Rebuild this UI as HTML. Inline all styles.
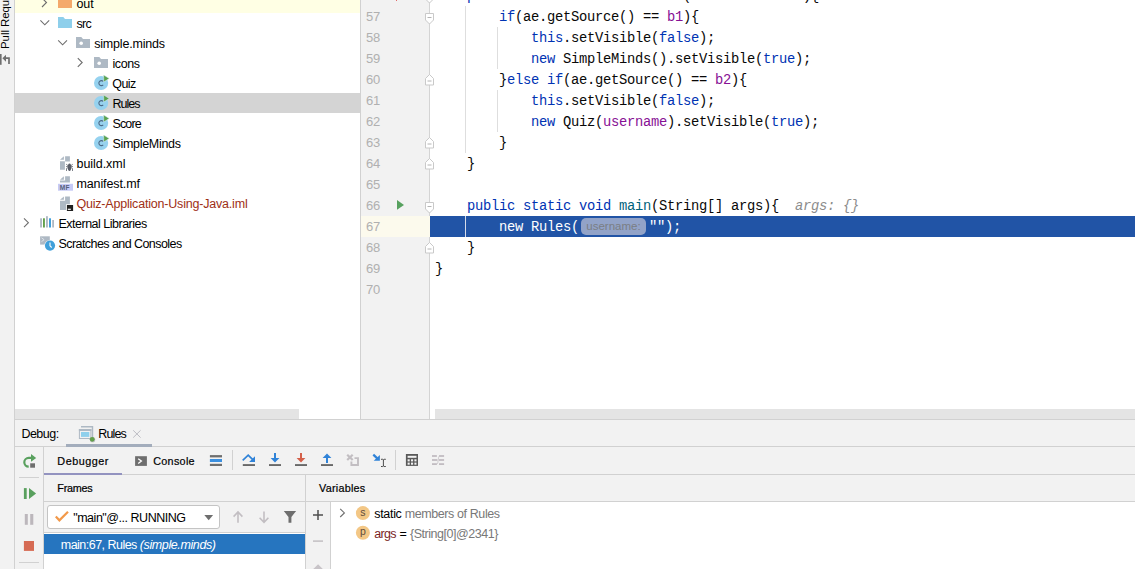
<!DOCTYPE html>
<html>
<head>
<meta charset="utf-8">
<style>
*{margin:0;padding:0;box-sizing:border-box;}
html,body{width:1135px;height:569px;overflow:hidden;background:#fff;}
body{position:relative;font-family:"Liberation Sans",sans-serif;font-size:12px;color:#000;}
.abs{position:absolute;}
#strip{left:0;top:0;width:15px;height:569px;background:#f2f2f2;border-right:1px solid #d1d1d1;overflow:hidden;}
#tree{left:15px;top:0;width:345px;height:419px;background:#fff;overflow:hidden;}
.row{position:absolute;height:20px;line-height:20px;white-space:nowrap;font-size:12.5px;}
.row span.t{position:absolute;top:0;}
#gutter{left:360px;top:0;width:70px;height:419px;background:#f2f2f2;border-left:1px solid #d1d1d1;border-right:1px solid #d4d4d4;}
.ln{position:absolute;left:5px;font-family:"Liberation Sans",sans-serif;font-size:13px;color:#b0b0b0;height:21px;line-height:21px;letter-spacing:-0.3px;}
#code{left:430px;top:0;width:705px;height:419px;background:#fff;overflow:hidden;}
.cl{position:absolute;left:5px;height:21px;line-height:23px;font-family:"Liberation Mono",monospace;font-size:13.8px;letter-spacing:-0.28px;white-space:pre;color:#080808;}
.ts{position:absolute;height:20px;line-height:20px;white-space:pre;font-size:10.8px;-webkit-text-stroke:0.2px #000;}
.tx{position:absolute;height:20px;line-height:20px;white-space:pre;font-size:12.5px;}
.k{color:#0033b3;}
.hint{color:#8c8c8c;font-style:italic;}
.inl{display:inline-block;vertical-align:top;margin:2px 3px 0 2px;height:17px;line-height:17px;letter-spacing:0;padding:0;width:65px;text-align:center;border-radius:5px;background:#92a3c8;color:#7a7e84;font-family:"Liberation Sans",sans-serif;font-size:11.5px;}
.f{color:#871094;}
.m{color:#00627a;}
</style>
</head>
<body>
<div id="strip" class="abs"><div style="position:absolute;left:-2px;top:48.500px;transform-origin:0 0;transform:rotate(-90deg);white-space:nowrap;font-size:11.5px;line-height:14px;letter-spacing:-0.080px;color:#000;">Pull Requests</div>
<svg class="abs" style="left:0;top:52px" width="14" height="16" viewBox="0 52 14 16"><rect x="0" y="54" width="1.600" height="10.800" fill="#6e6e6e"/><path d="M9 64v-5.800h-4.500" stroke="#6e6e6e" stroke-width="1.700" fill="none"/><path d="M6 54.700v7l-3.600-3.500z" fill="#6e6e6e"/></svg>
</div>
<div id="tree" class="abs">
<div class="abs" style="left:0;top:0;width:345px;height:13px;background:#ffffe4;"></div>
<div class="abs" style="left:0;top:93px;width:345px;height:20px;background:#d4d4d4;"></div>
<!-- chevrons -->
<svg class="abs" style="left:0;top:0" width="345" height="260" viewBox="15 0 345 260" fill="none" stroke="#6e6e6e" stroke-width="1.1">
<path d="M42 -2l4.500 4.500l-4.500 4.500"/>
<path d="M40.400 20.400l4.400 4.400l4.400-4.400"/>
<path d="M58.200 40.400l4.400 4.400l4.400-4.400"/>
<path d="M77.800 58.100l4.400 4.400l-4.400 4.400"/>
<path d="M24 218.300l4.400 4.400l-4.400 4.400"/>
</svg>
<svg class="abs" style="left:0;top:0" width="345" height="260" viewBox="0 0 345 260">
<path d="M45 159.700l3.900-3.500v3.500z M50.100 156.200h4.800v5.400h-4.800z M45 161.300h4.900v8.500h-4.900z" fill="#aeb9c4"/>
<g fill="#565b66"><ellipse cx="54.500" cy="167.200" rx="1.700" ry="3.700"/></g><g stroke="#5d626c" stroke-width="0.800" fill="none"><path d="M51.200 164.200l2.100 1.700M57.800 164.200l-2.100 1.700M51 166.600h7M51.500 171v-2.500l1.700-1M57.500 171v-2.500l-1.700-1"/></g>
<path d="M45 179.700l3.900-3.500v3.500z M50.100 176.200h4.800v6.300h-4.800z M45 180.400h5.200v2.100h-5.200z" fill="#aeb9c4"/>
<rect x="43" y="183.800" width="15" height="6.900" fill="#c6caf6"/>
<text x="44.700" y="189.900" font-family="Liberation Sans" font-size="6.600" font-weight="bold" fill="#56617c" letter-spacing="0.300">MF</text>
<path d="M45 199.700l3.900-3.200v3.200z M50.100 196.500h4.800v7.700h-4.800z M45 200.800h6v9.100h-6z" fill="#aeb9c4"/>
<rect x="51.900" y="205" width="6.200" height="6" fill="#1f1f1f"/><rect x="52.800" y="208.700" width="3" height="1.200" fill="#fff"/>
<rect x="25.100" y="218.300" width="1.900" height="9.200" fill="#aeb9c4"/><rect x="28" y="218.300" width="1.900" height="9.200" fill="#62a04b"/><rect x="31" y="216.200" width="1.900" height="11.300" fill="#aeb9c4"/><rect x="34" y="218.300" width="2" height="9.200" fill="#40a0da"/><rect x="37.200" y="220" width="1.800" height="7.500" fill="#aeb9c4"/>
<rect x="25.100" y="236.300" width="9.700" height="8.300" fill="#aeb9c4"/><path d="M26.500 237.800l2.600 1.900l-2.600 1.900" stroke="#e4e8ec" stroke-width="0.900" fill="none"/><circle cx="35" cy="245.600" r="5.600" fill="#fff"/><circle cx="35" cy="245.600" r="5.100" fill="#40a0da"/><path d="M35 242.500v3.300l1.700 1.700" stroke="#fff" stroke-width="1.100" fill="none"/>
</svg>
<!-- folder icons -->
<svg class="abs" style="left:43px;top:-5px" width="14" height="13" viewBox="0 0 14 13"><path d="M0 0h5.5l1.6 2H14v11H0z" fill="#f4a96b"/></svg>
<svg class="abs" style="left:43px;top:17px" width="14" height="11" viewBox="0 0 14 11"><path d="M0 0h5.3l1.7 2H14v9H0z" fill="#8ecfeb"/></svg>
<svg class="abs" style="left:61px;top:37px" width="14" height="11" viewBox="0 0 14 11"><path d="M0 0h5.3l1.7 2H14v9H0z" fill="#aeb9c4"/><circle cx="5.2" cy="6.3" r="1.8" fill="#fff"/></svg>
<svg class="abs" style="left:79px;top:57px" width="14" height="11" viewBox="0 0 14 11"><path d="M0 0h5.3l1.7 2H14v9H0z" fill="#aeb9c4"/><circle cx="5.2" cy="6.3" r="1.8" fill="#fff"/></svg>
<svg class="abs" style="left:79px;top:75px" width="16" height="16" viewBox="0 0 16 16"><circle cx="7.1" cy="8" r="7.100" fill="#96d2ef"/><path d="M9.200 9.800a2.500 2.500 0 1 1 0-3.400" fill="none" stroke="#4d6a86" stroke-width="1.100"/><path d="M9.700 0l5.500 3.500l-5.500 3.600z" fill="#5ba24f" stroke="#d9eef7" stroke-width="0.500"/></svg>
<svg class="abs" style="left:79px;top:95px" width="16" height="16" viewBox="0 0 16 16"><circle cx="7.1" cy="8" r="7.100" fill="#96d2ef"/><path d="M9.200 9.800a2.500 2.500 0 1 1 0-3.400" fill="none" stroke="#4d6a86" stroke-width="1.100"/><path d="M9.700 0l5.500 3.500l-5.500 3.600z" fill="#5ba24f" stroke="#d9eef7" stroke-width="0.500"/></svg>
<svg class="abs" style="left:79px;top:115px" width="16" height="16" viewBox="0 0 16 16"><circle cx="7.1" cy="8" r="7.100" fill="#96d2ef"/><path d="M9.200 9.800a2.500 2.500 0 1 1 0-3.400" fill="none" stroke="#4d6a86" stroke-width="1.100"/><path d="M9.700 0l5.500 3.500l-5.500 3.600z" fill="#5ba24f" stroke="#d9eef7" stroke-width="0.500"/></svg>
<svg class="abs" style="left:79px;top:135px" width="16" height="16" viewBox="0 0 16 16"><circle cx="7.1" cy="8" r="7.100" fill="#96d2ef"/><path d="M9.200 9.800a2.500 2.500 0 1 1 0-3.400" fill="none" stroke="#4d6a86" stroke-width="1.100"/><path d="M9.700 0l5.500 3.500l-5.500 3.600z" fill="#5ba24f" stroke="#d9eef7" stroke-width="0.500"/></svg>
<div class="row" style="top:-6px;left:61.5px;letter-spacing:-0.094px;">out</div>
<div class="row" style="top:14px;left:61.5px;letter-spacing:-0.688px;">src</div>
<div class="row" style="top:34px;left:79.2px;letter-spacing:-0.195px;">simple.minds</div>
<div class="row" style="top:54px;left:97.5px;letter-spacing:-0.419px;">icons</div>
<div class="row" style="top:74px;left:97.3px;letter-spacing:-0.555px;">Quiz</div>
<div class="row" style="top:94px;left:97.5px;letter-spacing:-0.975px;">Rules</div>
<div class="row" style="top:114px;left:97.5px;letter-spacing:-0.872px;">Score</div>
<div class="row" style="top:134px;left:97.5px;letter-spacing:-0.315px;">SimpleMinds</div>
<div class="row" style="top:154px;left:61.5px;letter-spacing:-0.049px;">build.xml</div>
<div class="row" style="top:174px;left:61.4px;letter-spacing:-0.099px;">manifest.mf</div>
<div class="row" style="top:194px;left:61.4px;letter-spacing:-0.195px;color:#9e2f16;">Quiz-Application-Using-Java.iml</div>
<div class="row" style="top:214px;left:43.5px;letter-spacing:-0.502px;">External Libraries</div>
<div class="row" style="top:234px;left:43.5px;letter-spacing:-0.562px;">Scratches and Consoles</div>
</div>
<div id="gutter" class="abs"><div class="abs" style="left:0;top:216px;width:69px;height:21px;background:#fcfaed;"></div>
<div class="ln" style="top:-15px">56</div>
<div class="ln" style="top:6px">57</div>
<div class="ln" style="top:27px">58</div>
<div class="ln" style="top:48px">59</div>
<div class="ln" style="top:69px">60</div>
<div class="ln" style="top:90px">61</div>
<div class="ln" style="top:111px">62</div>
<div class="ln" style="top:132px">63</div>
<div class="ln" style="top:153px">64</div>
<div class="ln" style="top:174px">65</div>
<div class="ln" style="top:195px">66</div>
<div class="ln" style="top:216px">67</div>
<div class="ln" style="top:237px">68</div>
<div class="ln" style="top:258px">69</div>
<div class="ln" style="top:279px">70</div>
<svg class="abs" style="left:35px;top:199px" width="10" height="12" viewBox="0 0 10 12"><path d="M1 1.100l7 4.800l-7 4.800z" fill="#57a15f"/></svg>
</div>
<div id="code" class="abs"><div class="abs" style="left:35px;top:6px;width:1px;height:147px;background:#dedede;"></div>
<div class="abs" style="left:67px;top:27px;width:1px;height:42px;background:#dedede;"></div>
<div class="abs" style="left:67px;top:90px;width:1px;height:42px;background:#dedede;"></div>
<div class="abs" style="left:0;top:216px;width:705px;height:21px;background:#2154a6;"></div>
<div class="abs" style="left:35px;top:216px;width:1px;height:21px;background:#d6dcea;"></div>
<div class="cl" style="top:-15px">    <span class="k">public</span> <span class="k">void</span> <span class="m">actionPerformed</span>(ActionEvent ae){</div>
<div class="cl" style="top:6px">        <span class="k">if</span>(ae.getSource() == <span class="f">b1</span>){</div>
<div class="cl" style="top:27px">            <span class="k">this</span>.setVisible(<span class="k">false</span>);</div>
<div class="cl" style="top:48px">            <span class="k">new</span> SimpleMinds().setVisible(<span class="k">true</span>);</div>
<div class="cl" style="top:69px">        }<span class="k">else</span> <span class="k">if</span>(ae.getSource() == <span class="f">b2</span>){</div>
<div class="cl" style="top:90px">            <span class="k">this</span>.setVisible(<span class="k">false</span>);</div>
<div class="cl" style="top:111px">            <span class="k">new</span> Quiz(<span class="f">username</span>).setVisible(<span class="k">true</span>);</div>
<div class="cl" style="top:132px">        }</div>
<div class="cl" style="top:153px">    }</div>
<div class="cl" style="top:195px">    <span class="k">public</span> <span class="k">static</span> <span class="k">void</span> <span class="m">main</span>(String[] args){<span class="hint">  args: {}</span></div>
<div class="cl" style="top:237px">    }</div>
<div class="cl" style="top:258px">}</div>
<div class="cl" style="top:216px;color:#fff">        new Rules(<span class="inl">username:</span>"");</div>
</div>
<div id="folds">
<div class="abs" style="left:396px;top:0;width:1px;height:1px;background:#e26a6a;"></div>
<svg class="abs" style="left:424px;top:-8px" width="11" height="12" viewBox="0 0 11 12"><path d="M1.500 0.500h8v6.500l-4 4l-4-4z" fill="#fff" stroke="#c9c9c9"/><path d="M3.500 4.500h4" stroke="#b4b4b4"/></svg>
<svg class="abs" style="left:424px;top:13px" width="11" height="12" viewBox="0 0 11 12"><path d="M1.500 0.500h8v6.500l-4 4l-4-4z" fill="#fff" stroke="#c9c9c9"/><path d="M3.500 4.500h4" stroke="#b4b4b4"/></svg>
<svg class="abs" style="left:424px;top:202px" width="11" height="12" viewBox="0 0 11 12"><path d="M1.500 0.500h8v6.500l-4 4l-4-4z" fill="#fff" stroke="#c9c9c9"/><path d="M3.500 4.500h4" stroke="#b4b4b4"/></svg>
<svg class="abs" style="left:424px;top:74px" width="11" height="12" viewBox="0 0 11 12"><path d="M1.500 11h8v-6.500l-4-4l-4 4z" fill="#fff" stroke="#c9c9c9"/><path d="M3.500 7h4" stroke="#b4b4b4"/></svg>
<svg class="abs" style="left:424px;top:137px" width="11" height="12" viewBox="0 0 11 12"><path d="M1.500 11h8v-6.500l-4-4l-4 4z" fill="#fff" stroke="#c9c9c9"/><path d="M3.500 7h4" stroke="#b4b4b4"/></svg>
<svg class="abs" style="left:424px;top:158px" width="11" height="12" viewBox="0 0 11 12"><path d="M1.500 11h8v-6.500l-4-4l-4 4z" fill="#fff" stroke="#c9c9c9"/><path d="M3.500 7h4" stroke="#b4b4b4"/></svg>
<svg class="abs" style="left:424px;top:242px" width="11" height="12" viewBox="0 0 11 12"><path d="M1.500 11h8v-6.500l-4-4l-4 4z" fill="#fff" stroke="#c9c9c9"/><path d="M3.500 7h4" stroke="#b4b4b4"/></svg>
</div>
<div id="bottom">
<div class="abs" style="left:15px;top:409px;width:284px;height:10px;background:#e4e4e4;"></div>
<div class="abs" style="left:435px;top:409px;width:700px;height:10px;background:#e4e4e4;"></div>
<div class="abs" style="left:15px;top:419px;width:1120px;height:150px;background:#f2f2f2;border-top:1px solid #d1d1d1;"></div>
<div class="abs" style="left:15px;top:446px;width:1120px;height:1px;background:#d1d1d1;"></div>
<div class="abs" style="left:66px;top:444px;width:86px;height:3px;background:#a3adbc;"></div>
<div class="tx" style="left:21.4px;top:424.0px;letter-spacing:-0.518px;">Debug:</div>
<div class="tx" style="left:98.3px;top:424.0px;letter-spacing:-0.875px;">Rules</div>
<div class="abs" style="left:43px;top:447px;width:1px;height:122px;background:#d1d1d1;"></div>
<div class="abs" style="left:44px;top:474px;width:1091px;height:1px;background:#d1d1d1;"></div>
<div class="abs" style="left:44px;top:473px;width:78px;height:2px;background:#9393c0;"></div>
<div class="ts" style="left:57.3px;top:451.0px;letter-spacing:0.535px;">Debugger</div>
<div class="ts" style="left:153.2px;top:451.0px;letter-spacing:0.297px;">Console</div>
<div class="abs" style="left:44px;top:501px;width:1091px;height:1px;background:#d1d1d1;"></div>
<div class="ts" style="left:57.3px;top:478.0px;letter-spacing:-0.232px;">Frames</div>
<div class="ts" style="left:319.0px;top:478.0px;letter-spacing:0.253px;">Variables</div>
<div class="abs" style="left:44px;top:502px;width:261px;height:67px;background:#fff;"></div>
<div class="abs" style="left:44px;top:502px;width:261px;height:30px;background:#f2f2f2;border-bottom:1px solid #d1d1d1;box-sizing:content-box;"></div>
<div class="abs" style="left:305px;top:475px;width:1px;height:94px;background:#d1d1d1;"></div>
<div class="abs" style="left:330px;top:502px;width:1px;height:67px;background:#d1d1d1;"></div>
<div class="abs" style="left:331px;top:502px;width:804px;height:67px;background:#fff;"></div>
<div class="abs" style="left:47px;top:505px;width:173px;height:24px;background:#fff;border:1px solid #c4c4c4;border-radius:3px;"></div>
<div class="tx" style="left:73.2px;top:508.0px;letter-spacing:-0.471px;">"main"@... RUNNING</div>
<div class="abs" style="left:44px;top:534px;width:261px;height:20px;background:#2675bf;"></div>
<div class="tx" style="left:60.8px;top:535.0px;letter-spacing:-0.524px;color:#fff;">main:67, Rules </div>
<div class="tx" style="left:139.8px;top:535.0px;letter-spacing:-0.390px;color:#fff;font-style:italic;">(simple.minds)</div>
<div class="tx" style="left:374.2px;top:503.5px;letter-spacing:-0.299px;">static</div>
<div class="tx" style="left:401.6px;top:503.5px;letter-spacing:-0.400px;color:#787878;"> members of Rules</div>
<div class="tx" style="left:374.2px;top:523.5px;letter-spacing:-0.629px;color:#7a1f1f;">args</div>
<div class="tx" style="left:396.0px;top:523.5px;letter-spacing:-0.083px;"> = </div>
<div class="tx" style="left:410.0px;top:523.5px;letter-spacing:-0.463px;color:#787878;">{String[0]@2341}</div>
<svg class="abs" style="left:0;top:419px" width="1135" height="150" viewBox="0 419 1135 150">
<path d="M81 426h12.200v11.300h-1.400v-9.800h-10.800z" fill="#aeb9c4"/><rect x="79.400" y="429.500" width="11.500" height="9" fill="#f2f2f2" stroke="#aeb9c4" stroke-width="1"/><rect x="78.900" y="429" width="12.500" height="2" fill="#aeb9c4"/><rect x="81" y="432" width="8.300" height="4.900" fill="#8fd0ec"/><circle cx="92.600" cy="439.700" r="2.600" fill="#b9bcc0"/><circle cx="92.200" cy="439.300" r="2.400" fill="#62a04b"/>
<path d="M133.200 430.300l7.400 7.300M140.600 430.300l-7.400 7.300" stroke="#bdbdc4" stroke-width="1" fill="none"/>
<path d="M28.700 466.700a4.400 4.400 0 0 1 0-8.800h3" fill="none" stroke="#59a05e" stroke-width="2.200"/><path d="M31 454l5.200 3.900l-5.200 3.900z" fill="#59a05e"/><rect x="30.200" y="463.300" width="4.800" height="4.400" fill="#6e6e6e"/>
<rect x="19" y="477" width="20" height="1" fill="#d1d1d1"/><rect x="19" y="562" width="20" height="1" fill="#d1d1d1"/>
<rect x="23.900" y="488.100" width="2.800" height="10.900" fill="#59a05e"/><path d="M29 488.100l7.100 5.450l-7.100 5.450z" fill="#59a05e"/>
<rect x="24.800" y="514" width="3" height="10.800" fill="#bcb7bc"/><rect x="30.200" y="514" width="3.100" height="10.800" fill="#bcb7bc"/>
<rect x="23.900" y="541" width="10.100" height="9.900" fill="#d66b54"/>
<rect x="135.100" y="456.200" width="11.800" height="9.700" fill="#6e6e6e"/><path d="M138.200 458.700l3.200 2.350l-3.200 2.350" stroke="#fff" stroke-width="1.300" fill="none"/>
<rect x="209.900" y="455.100" width="12.100" height="2.300" fill="#6e6e6e"/><rect x="209.900" y="459" width="12.100" height="3" fill="#3b8fdf"/><rect x="209.900" y="463.800" width="12.100" height="2.200" fill="#6e6e6e"/>
<rect x="232" y="450" width="1" height="20" fill="#d1d1d1"/><rect x="395" y="450" width="1" height="20" fill="#d1d1d1"/>
<rect x="242.800" y="464.200" width="12.200" height="1.700" fill="#595959"/><path d="M242.700 460.400l5.500-5.200l4.600 4.500" stroke="#3083d8" stroke-width="1.700" fill="none"/><path d="M255 456.200v5.800h-5.900z" fill="#3083d8"/>
<rect x="269" y="464.200" width="12" height="1.700" fill="#595959"/><rect x="274" y="453" width="2" height="5.500" fill="#3083d8"/><path d="M270.6 458h8.800l-4.400 4.500z" fill="#3083d8"/>
<rect x="295" y="464.200" width="12" height="1.700" fill="#595959"/><rect x="300" y="453" width="2" height="5.500" fill="#d4604a"/><path d="M296.6 458h8.800l-4.400 4.500z" fill="#d4604a"/>
<rect x="321" y="464.200" width="12" height="1.700" fill="#595959"/><rect x="326" y="457.500" width="2" height="5.500" fill="#3083d8"/><path d="M322.600 457.900h8.800l-4.400-4.400z" fill="#3083d8"/>
<path d="M347.200 454.700l5.500 5.300M352.700 454.700l-5.500 5.300" stroke="#c2bec2" stroke-width="2.200" fill="none"/><path d="M354.500 458.100h3.500v6.900h-6.600v-3.500" stroke="#c2bec2" stroke-width="1.900" fill="none"/>
<path d="M373.300 454.600l4.500 4.300" stroke="#3083d8" stroke-width="2.200" fill="none"/><path d="M379.900 455v5.800h-6.200z" fill="#3083d8"/><path d="M381 459.300h1.700l0.700 0.500l0.700-0.500h1.700M381 466.500h1.700l0.700-0.500l0.700 0.500h1.700M383.400 459.800v6.200" stroke="#3a3a3a" stroke-width="0.900" fill="none"/>
<rect x="405.900" y="454" width="12.100" height="11.900" fill="#595959"/><rect x="407.600" y="455.800" width="8.900" height="2" fill="#f2f2f2"/><rect x="407.6" y="459.3" width="2.100" height="2.100" fill="#f2f2f2"/><rect x="407.6" y="462.6" width="2.100" height="2.100" fill="#f2f2f2"/><rect x="411" y="459.3" width="2.100" height="2.100" fill="#f2f2f2"/><rect x="411" y="462.6" width="2.100" height="2.100" fill="#f2f2f2"/><rect x="414.4" y="459.3" width="2.100" height="2.100" fill="#f2f2f2"/><rect x="414.4" y="462.6" width="2.100" height="2.100" fill="#f2f2f2"/>
<g fill="#c1bcc1"><rect x="432" y="455.100" width="4.900" height="1.800"/><rect x="439" y="455.100" width="5.100" height="1.800"/><rect x="432" y="459.100" width="5.300" height="1.800"/><rect x="439" y="459.100" width="5.100" height="1.800"/><rect x="432" y="463.200" width="4.900" height="1.800"/><rect x="439" y="463.200" width="5.100" height="1.800"/></g><path d="M436.500 464.100c1.800 0 1.300-3 1.700-4.100s0-4 1.500-4" stroke="#c8c4c8" stroke-width="0.900" fill="none"/>
<path d="M55.800 516.500l3.600 3.800l8.600-8.600" stroke="#f2994a" stroke-width="2.200" fill="none"/>
<path d="M204.300 515h8.800l-4.400 5.300z" fill="#6e6e6e"/>
<path d="M238 522.700v-10.500M233.600 516.600l4.400-4.600l4.400 4.600" stroke="#c2bec2" stroke-width="1.600" fill="none"/><path d="M264 511.600v10.500M259.600 517.700l4.400 4.600l4.400-4.600" stroke="#c2bec2" stroke-width="1.600" fill="none"/>
<path d="M283.800 510.900h12.300l-4.700 6.200v5.600h-2.900v-5.600z" fill="#6e6e6e"/>
<path d="M313 515h10M318 510v10" stroke="#4f4f4f" stroke-width="1.500" fill="none"/><path d="M313 541.100h10" stroke="#c2bec2" stroke-width="1.500" fill="none"/><path d="M312.800 569.500l5.250-5.300l5.250 5.300z" fill="#c8c4c8"/>
<path d="M340.200 508.800l4.200 4.100l-4.200 4.100" stroke="#6e6e6e" stroke-width="1.100" fill="none"/>
<circle cx="362.900" cy="513.100" r="7" fill="#f3c786"/><circle cx="362.900" cy="532.700" r="7" fill="#f3c786"/><text x="360.200" y="516.200" font-family="Liberation Sans" font-size="10.500" fill="#5e4c3b">s</text><text x="359.900" y="535" font-family="Liberation Sans" font-size="10.500" fill="#5e4c3b">p</text>
</svg>
</div>
</body>
</html>
